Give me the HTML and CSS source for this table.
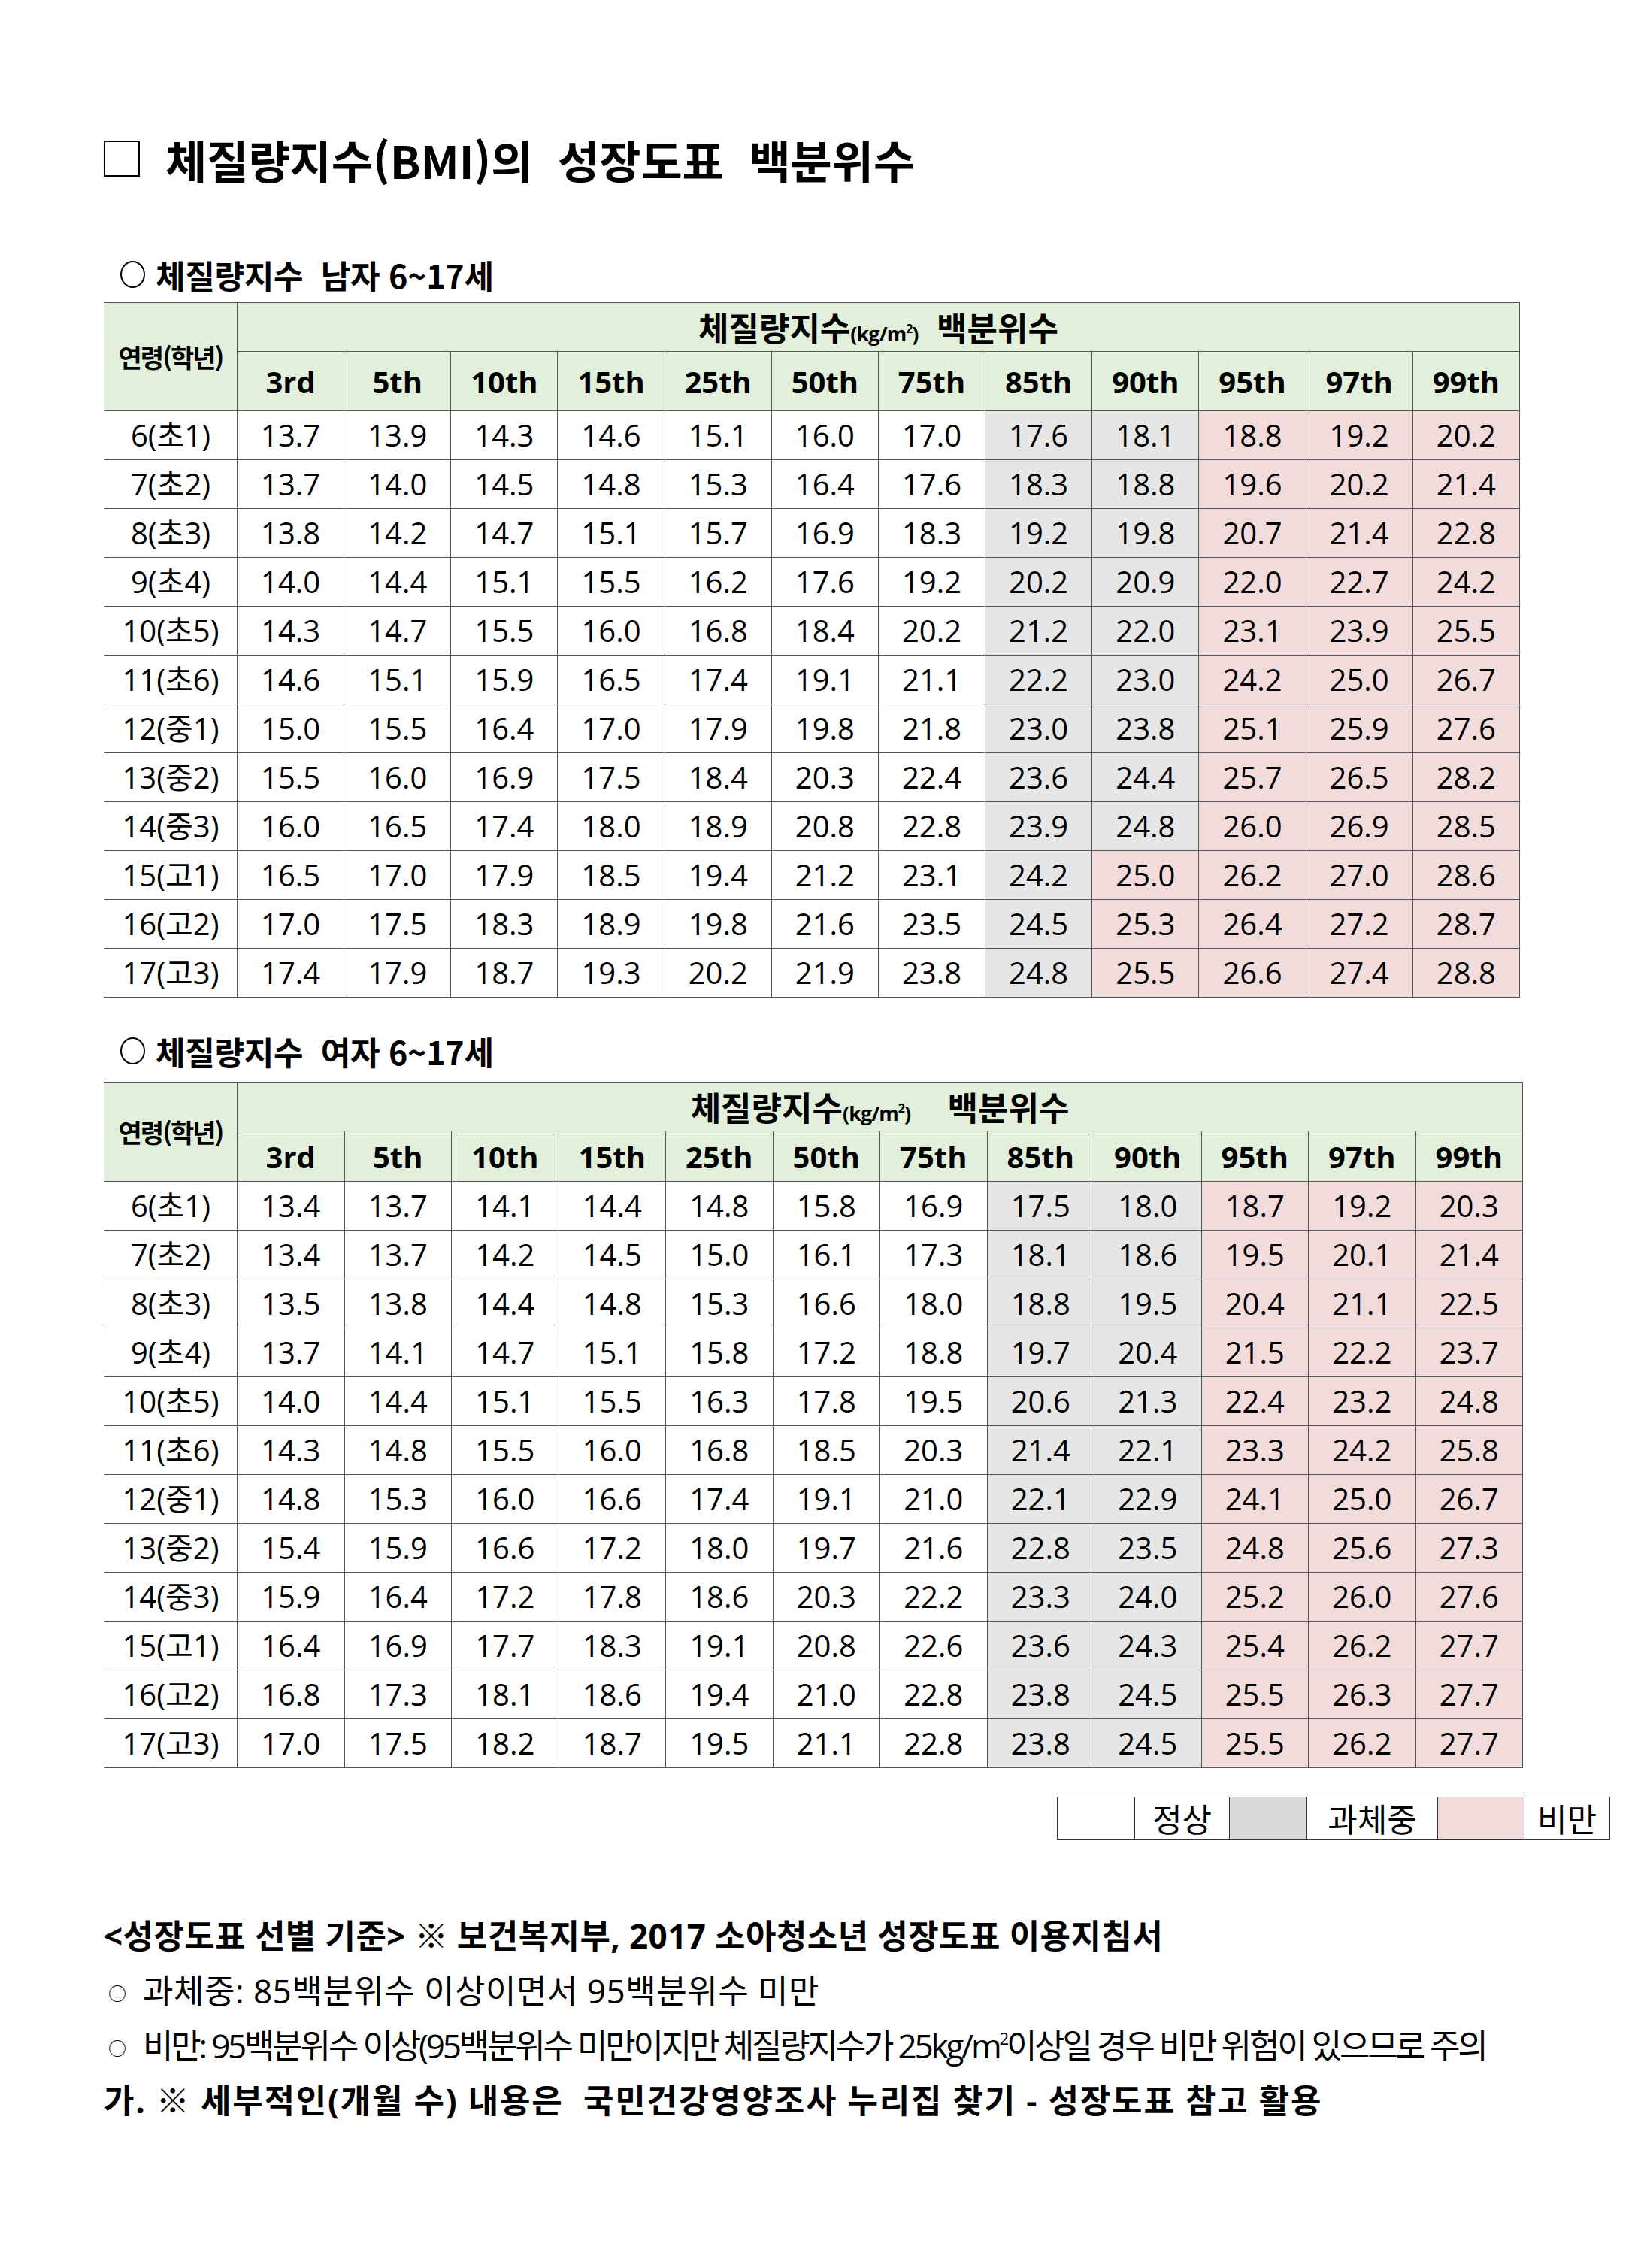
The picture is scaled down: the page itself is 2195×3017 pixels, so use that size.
FILE: index.html
```html
<!DOCTYPE html>
<html lang="ko">
<head>
<meta charset="utf-8">
<title>체질량지수(BMI)의 성장도표 백분위수</title>
<link rel="stylesheet" href="styles.css">
</head>
<body>
<div class="page">
  <h1 class="title"><span class="sq"></span><span class="title-text">체질량지수(BMI)의&nbsp; 성장도표&nbsp; 백분위수</span></h1>

  <h2 class="sub"><span class="circ"></span>체질량지수&nbsp; 남자 6~17세</h2>
  <table class="bmi male">
    <colgroup><col class="c-age"><col span="12"></colgroup>
    <thead>
      <tr class="h1"><th rowspan="2" class="age-h">연령(학년)</th><th colspan="12" class="span-h">체질량지수<small>(kg/m<sup>2</sup>)</small>&nbsp; 백분위수</th></tr>
      <tr class="h2"><th>3rd</th><th>5th</th><th>10th</th><th>15th</th><th>25th</th><th>50th</th><th>75th</th><th>85th</th><th>90th</th><th>95th</th><th>97th</th><th>99th</th></tr>
    </thead>
    <tbody>
      <tr><td>6(초1)</td><td>13.7</td><td>13.9</td><td>14.3</td><td>14.6</td><td>15.1</td><td>16.0</td><td>17.0</td><td class="g">17.6</td><td class="g">18.1</td><td class="p">18.8</td><td class="p">19.2</td><td class="p">20.2</td></tr>
      <tr><td>7(초2)</td><td>13.7</td><td>14.0</td><td>14.5</td><td>14.8</td><td>15.3</td><td>16.4</td><td>17.6</td><td class="g">18.3</td><td class="g">18.8</td><td class="p">19.6</td><td class="p">20.2</td><td class="p">21.4</td></tr>
      <tr><td>8(초3)</td><td>13.8</td><td>14.2</td><td>14.7</td><td>15.1</td><td>15.7</td><td>16.9</td><td>18.3</td><td class="g">19.2</td><td class="g">19.8</td><td class="p">20.7</td><td class="p">21.4</td><td class="p">22.8</td></tr>
      <tr><td>9(초4)</td><td>14.0</td><td>14.4</td><td>15.1</td><td>15.5</td><td>16.2</td><td>17.6</td><td>19.2</td><td class="g">20.2</td><td class="g">20.9</td><td class="p">22.0</td><td class="p">22.7</td><td class="p">24.2</td></tr>
      <tr><td>10(초5)</td><td>14.3</td><td>14.7</td><td>15.5</td><td>16.0</td><td>16.8</td><td>18.4</td><td>20.2</td><td class="g">21.2</td><td class="g">22.0</td><td class="p">23.1</td><td class="p">23.9</td><td class="p">25.5</td></tr>
      <tr><td>11(초6)</td><td>14.6</td><td>15.1</td><td>15.9</td><td>16.5</td><td>17.4</td><td>19.1</td><td>21.1</td><td class="g">22.2</td><td class="g">23.0</td><td class="p">24.2</td><td class="p">25.0</td><td class="p">26.7</td></tr>
      <tr><td>12(중1)</td><td>15.0</td><td>15.5</td><td>16.4</td><td>17.0</td><td>17.9</td><td>19.8</td><td>21.8</td><td class="g">23.0</td><td class="g">23.8</td><td class="p">25.1</td><td class="p">25.9</td><td class="p">27.6</td></tr>
      <tr><td>13(중2)</td><td>15.5</td><td>16.0</td><td>16.9</td><td>17.5</td><td>18.4</td><td>20.3</td><td>22.4</td><td class="g">23.6</td><td class="g">24.4</td><td class="p">25.7</td><td class="p">26.5</td><td class="p">28.2</td></tr>
      <tr><td>14(중3)</td><td>16.0</td><td>16.5</td><td>17.4</td><td>18.0</td><td>18.9</td><td>20.8</td><td>22.8</td><td class="g">23.9</td><td class="g">24.8</td><td class="p">26.0</td><td class="p">26.9</td><td class="p">28.5</td></tr>
      <tr><td>15(고1)</td><td>16.5</td><td>17.0</td><td>17.9</td><td>18.5</td><td>19.4</td><td>21.2</td><td>23.1</td><td class="g">24.2</td><td class="p">25.0</td><td class="p">26.2</td><td class="p">27.0</td><td class="p">28.6</td></tr>
      <tr><td>16(고2)</td><td>17.0</td><td>17.5</td><td>18.3</td><td>18.9</td><td>19.8</td><td>21.6</td><td>23.5</td><td class="g">24.5</td><td class="p">25.3</td><td class="p">26.4</td><td class="p">27.2</td><td class="p">28.7</td></tr>
      <tr><td>17(고3)</td><td>17.4</td><td>17.9</td><td>18.7</td><td>19.3</td><td>20.2</td><td>21.9</td><td>23.8</td><td class="g">24.8</td><td class="p">25.5</td><td class="p">26.6</td><td class="p">27.4</td><td class="p">28.8</td></tr>
    </tbody>
  </table>

  <h2 class="sub sub-f"><span class="circ"></span>체질량지수&nbsp; 여자 6~17세</h2>
  <table class="bmi female">
    <colgroup><col class="c-age"><col span="12"></colgroup>
    <thead>
      <tr class="h1"><th rowspan="2" class="age-h">연령(학년)</th><th colspan="12" class="span-h">체질량지수<small>(kg/m<sup>2</sup>)</small>&nbsp;&nbsp;&nbsp; 백분위수</th></tr>
      <tr class="h2"><th>3rd</th><th>5th</th><th>10th</th><th>15th</th><th>25th</th><th>50th</th><th>75th</th><th>85th</th><th>90th</th><th>95th</th><th>97th</th><th>99th</th></tr>
    </thead>
    <tbody>
      <tr><td>6(초1)</td><td>13.4</td><td>13.7</td><td>14.1</td><td>14.4</td><td>14.8</td><td>15.8</td><td>16.9</td><td class="g">17.5</td><td class="g">18.0</td><td class="p">18.7</td><td class="p">19.2</td><td class="p">20.3</td></tr>
      <tr><td>7(초2)</td><td>13.4</td><td>13.7</td><td>14.2</td><td>14.5</td><td>15.0</td><td>16.1</td><td>17.3</td><td class="g">18.1</td><td class="g">18.6</td><td class="p">19.5</td><td class="p">20.1</td><td class="p">21.4</td></tr>
      <tr><td>8(초3)</td><td>13.5</td><td>13.8</td><td>14.4</td><td>14.8</td><td>15.3</td><td>16.6</td><td>18.0</td><td class="g">18.8</td><td class="g">19.5</td><td class="p">20.4</td><td class="p">21.1</td><td class="p">22.5</td></tr>
      <tr><td>9(초4)</td><td>13.7</td><td>14.1</td><td>14.7</td><td>15.1</td><td>15.8</td><td>17.2</td><td>18.8</td><td class="g">19.7</td><td class="g">20.4</td><td class="p">21.5</td><td class="p">22.2</td><td class="p">23.7</td></tr>
      <tr><td>10(초5)</td><td>14.0</td><td>14.4</td><td>15.1</td><td>15.5</td><td>16.3</td><td>17.8</td><td>19.5</td><td class="g">20.6</td><td class="g">21.3</td><td class="p">22.4</td><td class="p">23.2</td><td class="p">24.8</td></tr>
      <tr><td>11(초6)</td><td>14.3</td><td>14.8</td><td>15.5</td><td>16.0</td><td>16.8</td><td>18.5</td><td>20.3</td><td class="g">21.4</td><td class="g">22.1</td><td class="p">23.3</td><td class="p">24.2</td><td class="p">25.8</td></tr>
      <tr><td>12(중1)</td><td>14.8</td><td>15.3</td><td>16.0</td><td>16.6</td><td>17.4</td><td>19.1</td><td>21.0</td><td class="g">22.1</td><td class="g">22.9</td><td class="p">24.1</td><td class="p">25.0</td><td class="p">26.7</td></tr>
      <tr><td>13(중2)</td><td>15.4</td><td>15.9</td><td>16.6</td><td>17.2</td><td>18.0</td><td>19.7</td><td>21.6</td><td class="g">22.8</td><td class="g">23.5</td><td class="p">24.8</td><td class="p">25.6</td><td class="p">27.3</td></tr>
      <tr><td>14(중3)</td><td>15.9</td><td>16.4</td><td>17.2</td><td>17.8</td><td>18.6</td><td>20.3</td><td>22.2</td><td class="g">23.3</td><td class="g">24.0</td><td class="p">25.2</td><td class="p">26.0</td><td class="p">27.6</td></tr>
      <tr><td>15(고1)</td><td>16.4</td><td>16.9</td><td>17.7</td><td>18.3</td><td>19.1</td><td>20.8</td><td>22.6</td><td class="g">23.6</td><td class="g">24.3</td><td class="p">25.4</td><td class="p">26.2</td><td class="p">27.7</td></tr>
      <tr><td>16(고2)</td><td>16.8</td><td>17.3</td><td>18.1</td><td>18.6</td><td>19.4</td><td>21.0</td><td>22.8</td><td class="g">23.8</td><td class="g">24.5</td><td class="p">25.5</td><td class="p">26.3</td><td class="p">27.7</td></tr>
      <tr><td>17(고3)</td><td>17.0</td><td>17.5</td><td>18.2</td><td>18.7</td><td>19.5</td><td>21.1</td><td>22.8</td><td class="g">23.8</td><td class="g">24.5</td><td class="p">25.5</td><td class="p">26.2</td><td class="p">27.7</td></tr>
    </tbody>
  </table>

  <table class="legend">
    <tr>
      <td class="sw sw-w"></td><td class="lt lt-1">정상</td>
      <td class="sw sw-g"></td><td class="lt lt-2">과체중</td>
      <td class="sw sw-p"></td><td class="lt lt-3">비만</td>
    </tr>
  </table>

  <div class="notes">
    <p class="note bold n1">&lt;성장도표 선별 기준&gt; ※ 보건복지부, 2017 소아청소년 성장도표 이용지침서</p>
    <p class="note n2"><span class="dot">○</span>과체중: 85백분위수 이상이면서 95백분위수 미만</p>
    <p class="note n3"><span class="dot">○</span>비만: 95백분위수 이상(95백분위수 미만이지만 체질량지수가 25kg/m<sup>2</sup>이상일 경우 비만 위험이 있으므로 주의</p>
    <p class="note bold n4">가. ※ 세부적인(개월 수) 내용은&nbsp; 국민건강영양조사 누리집 찾기 - 성장도표 참고 활용</p>
  </div>
</div>
</body>
</html>
```

FILE: styles.css
```css
html, body {
  margin: 0;
  padding: 0;
  background: #ffffff;
}

body {
  font-family: "Open Sans", "Noto Sans CJK KR", sans-serif;
  color: #000000;
}

.page {
  padding: 171px 0 0 138px;
}

.title {
  margin: 0;
  height: 80px;
  display: flex;
  align-items: center;
  font-family: "Noto Sans CJK KR", sans-serif;
  font-weight: 700;
  font-size: 60px;
  letter-spacing: 0;
  white-space: nowrap;
}

.sq {
  display: inline-block;
  width: 48px;
  height: 48px;
  border: 2px solid #000;
  box-sizing: border-box;
  margin-right: 34px;
  flex: none;
}

.sub {
  margin: 84px 0 0 0;
  height: 60px;
  display: flex;
  align-items: center;
  font-family: "Noto Sans CJK KR", sans-serif;
  font-weight: 700;
  font-size: 43px;
  letter-spacing: -0.3px;
  padding-left: 22px;
  white-space: nowrap;
}

.sub-f {
  margin-top: 41px;
}

.circ {
  display: inline-block;
  width: 33px;
  height: 36px;
  border: 2px solid #000;
  border-radius: 50%;
  box-sizing: border-box;
  margin-right: 14px;
  flex: none;
}

.bmi {
  border-collapse: collapse;
  table-layout: fixed;
  width: 1884px;
  margin-top: 7px;
  border: 1px solid #555;
}

.female {
  width: 1888px;
  margin-top: 11px;
}

.c-age {
  width: 177px;
}

.bmi th,
.bmi td {
  border: 1px solid #555;
  padding: 0;
  text-align: center;
  vertical-align: middle;
  white-space: nowrap;
}

.bmi th {
  background: #e2efda;
  font-weight: 700;
  font-size: 40px;
}

.bmi .age-h {
  font-family: "Noto Sans CJK KR", sans-serif;
  font-size: 34px;
  letter-spacing: -2px;
}

.bmi .span-h {
  font-family: "Noto Sans CJK KR", sans-serif;
  font-size: 44px;
  letter-spacing: 0;
}

.span-h small {
  font-family: "Open Sans", sans-serif;
  font-size: 27px;
  font-weight: 700;
  letter-spacing: -1px;
}

.span-h sup {
  font-size: 16px;
  vertical-align: 11px;
}

.male .h1 { height: 65px; }
.male .h2 { height: 79px; }
.female .h1 { height: 63px; }
.female .h2 { height: 67px; }

.bmi td {
  font-size: 40px;
  height: 64px;
  line-height: 1;
}

.bmi td.g {
  background: #e7e6e6;
}

.bmi td.p {
  background: #f2dcdb;
}

.legend {
  border-collapse: collapse;
  table-layout: fixed;
  margin: 38px 0 0 1268px;
  width: 730px;
  height: 57px;
}

.legend td {
  border: 1px solid #333;
  padding: 0;
  font-family: "Noto Sans CJK KR", sans-serif;
  font-size: 43px;
  text-align: center;
  line-height: 1;
}

.sw-w { width: 102px; background: #ffffff; }
.sw-g { width: 102px; background: #d9d9d9; }
.sw-p { width: 114px; background: #f2dcdb; }
.lt-1 { width: 125px; }
.lt-2 { width: 173px; }
.lt-3 { width: 113px; }

.notes {
  margin-top: 92px;
}

.note {
  margin: 0;
  height: 73px;
  line-height: 73px;
  font-size: 44px;
  font-family: "Open Sans", "Noto Sans CJK KR", sans-serif;
  letter-spacing: 0;
  white-space: nowrap;
}

.note.bold {
  font-weight: 700;
}

.n1 { letter-spacing: 0.4px; }
.n2 { letter-spacing: 0.5px; }
.n3 { letter-spacing: -3.2px; }
.n4 { letter-spacing: 1.8px; }

.note .dot {
  display: inline-block;
  font-family: "Noto Sans CJK KR", sans-serif;
  font-size: 24px;
  width: 52px;
  padding-left: 6px;
  box-sizing: border-box;
  vertical-align: 4px;
  letter-spacing: 0;
}

.note sup {
  font-size: 22px;
  vertical-align: 18px;
  line-height: 0;
}
```
